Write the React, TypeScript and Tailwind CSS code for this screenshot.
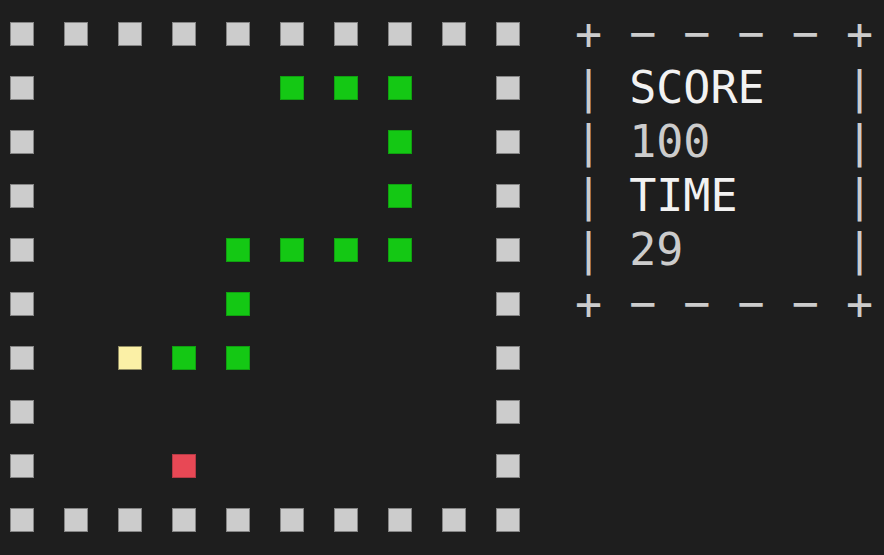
import React, { FC } from "react";

type Cell = "wall" | "snake" | "head" | "food" | "empty";

const SIZE = 10;
const snake = [
  [5, 1], [6, 1], [7, 1],
  [7, 2], [7, 3],
  [4, 4], [5, 4], [6, 4], [7, 4],
  [4, 5],
  [3, 6], [4, 6],
];
const head = [2, 6];
const food = [3, 8];

function cellAt(x: number, y: number): Cell {
  if (x === 0 || y === 0 || x === SIZE - 1 || y === SIZE - 1) return "wall";
  if (head[0] === x && head[1] === y) return "head";
  if (food[0] === x && food[1] === y) return "food";
  if (snake.some(([sx, sy]) => sx === x && sy === y)) return "snake";
  return "empty";
}

const cellClass: Record<Cell, string> = {
  wall: "bg-[#cccccc] border border-[#858585]",
  snake: "bg-[#14c814] border border-[#10a010]",
  head: "bg-[#fbf0a6] border border-[#8f8a62]",
  food: "bg-[#e84855] border border-[#b43a45]",
  empty: "",
};

// frame rows use the minus sign, the plain hyphen is too short in this font
const panel = [
  { text: "+ \u2212 \u2212 \u2212 \u2212 +" },
  { label: "SCORE", title: true },
  { label: "100" },
  { label: "TIME", title: true },
  { label: "29" },
  { text: "+ \u2212 \u2212 \u2212 \u2212 +" },
];

const App: FC = () => {
  return (
    <div
      className="w-[884px] h-[555px] bg-[#1e1e1e] flex items-start pt-[7px] overflow-hidden"
      style={{ fontFamily: '"DejaVu Sans Mono", "Liberation Mono", monospace' }}
    >
      <div className="grid grid-cols-[repeat(10,54px)] auto-rows-[54px] content-start w-[540px] shrink-0">
        {Array.from({ length: SIZE * SIZE }, (_, i) => {
          const x = i % SIZE;
          const y = Math.floor(i / SIZE);
          const kind = cellAt(x, y);
          return (
            <div key={i} className="h-[54px] flex items-center pl-[9.5px]">
              {kind !== "empty" && <div className={`w-[24px] h-[24px] ${cellClass[kind]}`} />}
            </div>
          );
        })}
      </div>

      <div className="ml-[35px] text-[45px] leading-[54px] whitespace-pre text-[#cccccc]">
        {panel.map((row, i) =>
          row.text ? (
            <div key={i}>{row.text}</div>
          ) : (
            <div key={i}>
              {"| "}
              <span className={row.title ? "text-[#f2f2f2]" : "text-[#cccccc]"}>
                {row.label!.padEnd(8, " ")}
              </span>
              {"|"}
            </div>
          )
        )}
      </div>
    </div>
  );
};

export default App;
